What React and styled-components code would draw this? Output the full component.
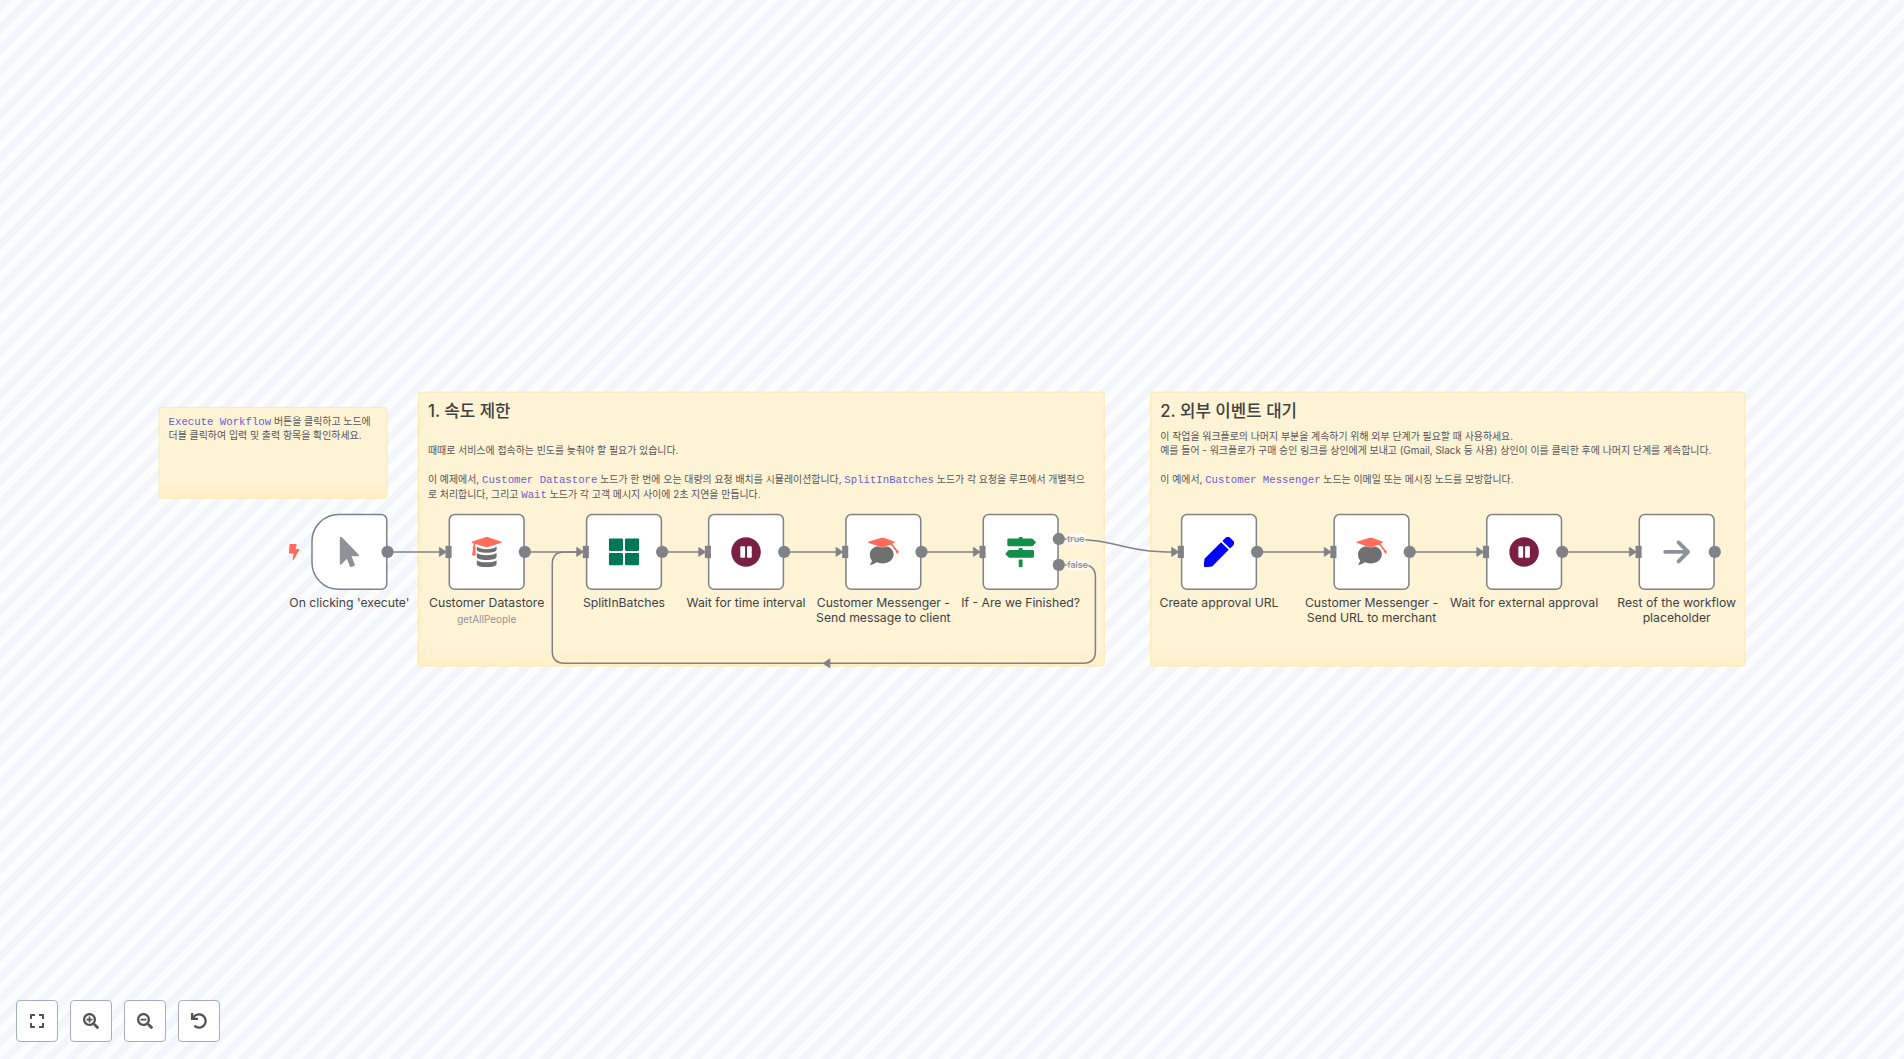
import React, { useEffect, useState } from "react";
import styled, { createGlobalStyle, css } from "styled-components";
import {
  FaMousePointer,
  FaThLarge,
  FaPauseCircle,
  FaMapSigns,
  FaPen,
  FaExpand,
  FaSearchPlus,
  FaSearchMinus,
  FaUndo,
} from "react-icons/fa";
import { FaArrowRight } from "react-icons/fa6";

const GRID = 20;
const NODE = 100;
const BOUNDS = { x: 0, y: -20, width: 2080, height: 360 };
const LINE = "#7f8287";

const GlobalStyle = createGlobalStyle`
  *, *::before, *::after { box-sizing: border-box; }
  body {
    margin: 0;
    font-family: Inter, "Noto Sans CJK KR", sans-serif;
    color: #414244;
  }
`;

const Page = styled.main`
  position: relative;
  height: 100vh;
  overflow: hidden;
  background: #fcfdff;
`;

const Backdrop = styled.svg`
  display: block;
  width: 100%;
  height: 100%;
`;

const Viewport = styled.div`
  position: absolute;
  top: 0;
  left: 0;
  transform-origin: 0 0;
`;

const StickyNote = styled.section`
  position: absolute;
  top: ${(p) => p.$y}px;
  left: ${(p) => p.$x}px;
  width: ${(p) => p.$width}px;
  height: ${(p) => p.$height}px;
  padding: 8px 12px;
  border: 1px solid #fee48c;
  border-radius: 4px;
  background: linear-gradient(to top, #fff0c6, #fff3d6 24px);
  color: #55565a;
  font-size: 13px;
  line-height: 19px;
`;

const StickyTitle = styled.h2`
  margin: 0 0 8px;
  color: #414244;
  font-size: 22px;
  font-weight: 500;
  line-height: 32px;
`;

const StickyText = styled.p`
  margin: 0;
  & + & {
    margin-top: 19px;
  }
`;

const Code = styled.code`
  color: #6b5dd0;
  font-family: "Liberation Mono", monospace;
  font-size: 14px;
  line-height: 16px;
`;

const Edges = styled.svg`
  position: absolute;
  top: 0;
  left: 0;
  overflow: visible;
  fill: none;
  stroke: ${LINE};
  stroke-width: 2;
`;

const NodeBox = styled.article`
  position: absolute;
  top: ${(p) => p.$y}px;
  left: ${(p) => p.$x}px;
  display: flex;
  align-items: center;
  justify-content: center;
  width: ${NODE}px;
  height: ${NODE}px;
  border: 2px solid ${LINE};
  border-radius: ${(p) => (p.$trigger ? "36px 8px 8px 36px" : "8px")};
  background: #fff;
`;

const NodeIcon = styled.span`
  display: flex;
  color: ${(p) => p.$color};
  font-size: 40px;
`;

const NodeCaption = styled.div`
  position: absolute;
  top: 104px;
  left: -52px;
  display: flex;
  flex-direction: column;
  gap: 4px;
  width: 200px;
  text-align: center;
`;

const NodeName = styled.h3`
  margin: 0;
  color: #414244;
  font-size: 16px;
  font-weight: 400;
  line-height: 20px;
`;

const NodeSubtitle = styled.span`
  color: #909298;
  font-size: 13px;
  line-height: 16px;
`;

const port = css`
  position: absolute;
  top: ${(p) => p.$top}px;
  height: 16px;
  background: ${LINE};
`;

const InputPort = styled.span`
  ${port}
  left: -6px;
  width: 8px;
`;

const OutputPort = styled.span`
  ${port}
  right: -10px;
  width: 16px;
  border-radius: 50%;
`;

const PortLabel = styled.span`
  position: absolute;
  top: ${(p) => p.$top}px;
  left: 108px;
  padding: 0 1px;
  background: rgba(255, 255, 255, 0.7);
  color: #7f8287;
  font-size: 12px;
  line-height: 14px;
`;

const TriggerMark = styled.svg`
  position: absolute;
  top: 36px;
  left: -33px;
  width: 16px;
  height: 24px;
  fill: #ff6d5a;
`;

const Controls = styled.nav`
  position: absolute;
  bottom: 17px;
  left: 16px;
  display: flex;
  gap: 12px;
`;

const ControlButton = styled.button`
  display: flex;
  align-items: center;
  justify-content: center;
  width: 42px;
  height: 42px;
  padding: 0;
  border: 1px solid #a8acba;
  border-radius: 4px;
  background: #fff;
  color: #525356;
  font-size: 16px;
  cursor: pointer;
`;

function HatDatabase() {
  return (
    <svg width="40" height="40" viewBox="0 0 40 40" aria-hidden="true">
      <g fill="#707070">
        <path d="M7 13c3 2.600 8 3.400 13 3.400s10-.8 13-3.400v4.200c0 2.200-6 4-13 4s-13-1.800-13-4z" />
        <path d="M7 21.500c3 2 8 2.800 13 2.800s10-.8 13-2.800v5c0 2.200-6 4-13 4s-13-1.800-13-4z" />
        <path d="M7 30.800c3 2 8 2.800 13 2.800s10-.8 13-2.800V36c0 2.200-6 4-13 4S7 38.200 7 36z" />
      </g>
      <path
        fill="#ff6d5a"
        stroke="#fff"
        strokeWidth="1"
        paintOrder="stroke"
        d="M20 .5c1 0 2 .2 3 .5l15.500 5.200c1.700.6 1.700 1.500 0 2.100L23 13.300c-2 .7-4 .7-6 0L5.500 9.600c-.6 1-.8 2-.8 3.300.8.500 1 1.500.4 2.400l.6 8.700c0 .5-.3.800-.8.800H1.700c-.6 0-.9-.3-.8-.8l1.200-8.700c-.6-.9-.5-1.900.4-2.400 0-1.700.2-3 .9-4.100L1.500 8.200c-1.600-.6-1.600-1.500 0-2L17 1c1-.3 2-.5 3-.5z"
      />
    </svg>
  );
}

function HatMessage() {
  return (
    <svg width="40" height="40" viewBox="0 0 40 40" aria-hidden="true">
      <path
        fill="#707070"
        d="M18 12c9 0 15.500 4.500 15.500 11.300S27 35 18.500 35c-2.800 0-5.300-.5-7.500-1.400C8.700 35.600 5.700 37 2 37c1.500-1.700 2.700-3.700 3-5.800-1.800-2-2.700-4.600-2.700-7.900C2.300 16.500 9 12 18 12z"
      />
      <path
        fill="#ff6d5a"
        stroke="#fff"
        strokeWidth="1"
        paintOrder="stroke"
        d="M17.500 1.500c1-.2 2-.2 3 0l13.700 4.700c1.400.6 1.400 1.300.2 1.900l-3 1.300c1.800 1.400 3 3 3.800 4.900 1 .1 1.600.8 1.600 1.700l3.700 3.500c.4.400.4.800 0 1.100l-2 1.500c-.4.300-.8.200-1-.3l-2.300-4.700c-1.200 0-2-.8-1.800-1.900-1-2-2.300-3.500-4.200-4.700l-7.200 2.600c-2 .6-4 .6-6 0L1 8.200c-1.400-.6-1.400-1.300 0-1.900z"
      />
    </svg>
  );
}

function BoltMark() {
  return (
    <TriggerMark viewBox="0 0 16 24" aria-hidden="true">
      <path d="M3.500 1.500h7.600c.6 0 .9.400.8.900L10.600 8.200h4c.7 0 1 .6.700 1.200L8 22.400c-.5.800-1.500.5-1.400-.4l1.400-8H2.600c-.6 0-.9-.4-.9-1l.8-10.600c.1-.6.4-.9 1-.9z" />
    </TriggerMark>
  );
}

const nodes = [
  { x: 200, name: "On clicking 'execute'", icon: <FaMousePointer />, color: "#909298", trigger: true },
  { x: 380, name: "Customer Datastore", subtitle: "getAllPeople", icon: <HatDatabase /> },
  { x: 560, name: "SplitInBatches", icon: <FaThLarge />, color: "#007755" },
  { x: 720, name: "Wait for time interval", icon: <FaPauseCircle />, color: "#7b2042" },
  { x: 900, name: "Customer Messenger - Send message to client", icon: <HatMessage /> },
  { x: 1080, name: "If - Are we Finished?", icon: <FaMapSigns />, color: "#12904a", outputs: ["true", "false"] },
  { x: 1340, name: "Create approval URL", icon: <FaPen />, color: "#0000ff" },
  { x: 1540, name: "Customer Messenger - Send URL to merchant", icon: <HatMessage /> },
  { x: 1740, name: "Wait for external approval", icon: <FaPauseCircle />, color: "#7b2042" },
  { x: 1940, name: "Rest of the workflow placeholder", icon: <FaArrowRight />, color: "#909298" },
];

const NODE_Y = 140;
const MID_Y = NODE_Y + NODE / 2;
const ROUND = 16;

function Arrow({ x, y, flip }) {
  const size = flip ? -9 : 9;
  return <path d={`M${x} ${y} l${-size} -6 v12 z`} fill={LINE} strokeWidth="1" strokeLinejoin="round" />;
}

function Connections() {
  const straight = nodes.slice(0, -1).filter((n) => !n.outputs);
  return (
    <Edges width="1" height="1" aria-hidden="true">
      {straight.map((n) => {
        const next = nodes[nodes.indexOf(n) + 1];
        return (
          <g key={n.x}>
            <path d={`M${n.x + NODE} ${MID_Y} H${next.x - 6}`} />
            <Arrow x={next.x - 3} y={MID_Y} />
          </g>
        );
      })}
      <path d={`M1188 173 C1260 173 1260 ${MID_Y} 1332 ${MID_Y}`} />
      <Arrow x={1337} y={MID_Y} />
      <path
        d={`M1188 207 H${1228 - ROUND} Q1228 207 1228 ${207 + ROUND} V${336 - ROUND} Q1228 336 ${1228 - ROUND} 336
            H${516 + ROUND} Q516 336 516 ${336 - ROUND} V${MID_Y + ROUND} Q516 ${MID_Y} ${516 + ROUND} ${MID_Y} H552`}
      />
      <Arrow x={871} y={336} flip />
    </Edges>
  );
}

function WorkflowNode({ node, first }) {
  const outputs = node.outputs || [""];
  return (
    <NodeBox $x={node.x} $y={NODE_Y} $trigger={node.trigger}>
      {node.trigger && <BoltMark />}
      <NodeIcon $color={node.color}>{node.icon}</NodeIcon>
      {!first && <InputPort $top={40} />}
      {outputs.map((label, i) => {
        const top = outputs.length > 1 ? 23 + i * 34 : 40;
        return (
          <React.Fragment key={label}>
            <OutputPort $top={top} />
            {label && <PortLabel $top={top + 1}>{label}</PortLabel>}
          </React.Fragment>
        );
      })}
      <NodeCaption>
        <NodeName>{node.name}</NodeName>
        {node.subtitle && <NodeSubtitle>{node.subtitle}</NodeSubtitle>}
      </NodeCaption>
    </NodeBox>
  );
}

function Stripes({ view }) {
  const gap = GRID * view.scale;
  return (
    <Backdrop aria-hidden="true">
      <pattern
        id="stripes"
        x={view.x % gap}
        y={(view.y % gap) + gap / 2}
        width={gap}
        height={gap}
        patternUnits="userSpaceOnUse"
        patternTransform={`rotate(135) translate(-${gap},-${gap})`}
      >
        <path d={`M0 ${gap / 2} H${gap}`} stroke="#f4f5fb" strokeWidth={gap / 2} />
      </pattern>
      <rect width="100%" height="100%" fill="url(#stripes)" />
    </Backdrop>
  );
}

function fitView(size, zoom) {
  const fit = Math.min(size.width / (BOUNDS.width * 1.2), size.height / (BOUNDS.height * 1.2));
  const scale = fit * zoom;
  return {
    scale,
    x: size.width / 2 - (BOUNDS.x + BOUNDS.width / 2) * scale,
    y: Math.floor(size.height / 2 - (BOUNDS.y + BOUNDS.height / 2) * scale),
  };
}

const windowSize = () => ({ width: window.innerWidth, height: window.innerHeight });

export default function App() {
  const [size, setSize] = useState(windowSize);
  const [zoom, setZoom] = useState(1);

  useEffect(() => {
    const onResize = () => setSize(windowSize());
    window.addEventListener("resize", onResize);
    return () => window.removeEventListener("resize", onResize);
  }, []);

  const view = fitView(size, zoom);

  return (
    <Page>
      <GlobalStyle />
      <Stripes view={view} />
      <Viewport style={{ transform: `translate(${view.x}px, ${view.y}px) scale(${view.scale})` }}>
        <StickyNote $x={0} $y={0} $width={300} $height={120}>
          <StickyText>
            <Code>Execute Workflow</Code> 버튼을 클릭하고 노드에 더블 클릭하여 입력 및 출력 항목을 확인하세요.
          </StickyText>
        </StickyNote>
        <StickyNote $x={340} $y={-20} $width={900} $height={360}>
          <StickyTitle>1. 속도 제한</StickyTitle>
          <StickyText>
            <br />
            때때로 서비스에 접속하는 빈도를 늦춰야 할 필요가 있습니다.
          </StickyText>
          <StickyText>
            이 예제에서, <Code>Customer Datastore</Code> 노드가 한 번에 오는 대량의 요청 배치를 시뮬레이션합니다,{" "}
            <Code>SplitInBatches</Code> 노드가 각 요청을 루프에서 개별적으
            <br />로 처리합니다, 그리고 <Code>Wait</Code> 노드가 각 고객 메시지 사이에 2초 지연을 만듭니다.
          </StickyText>
        </StickyNote>
        <StickyNote $x={1300} $y={-20} $width={780} $height={360}>
          <StickyTitle>2. 외부 이벤트 대기</StickyTitle>
          <StickyText>
            이 작업을 워크플로의 나머지 부분을 계속하기 위해 외부 단계가 필요할 때 사용하세요.
            <br />
            예를 들어 - 워크플로가 구매 승인 링크를 상인에게 보내고 (Gmail, Slack 등 사용) 상인이 이를 클릭한 후에 나머지
            단계를 계속합니다.
          </StickyText>
          <StickyText>
            이 예에서, <Code>Customer Messenger</Code> 노드는 이메일 또는 메시징 노드를 모방합니다.
          </StickyText>
        </StickyNote>
        <Connections />
        {nodes.map((node, i) => (
          <WorkflowNode key={node.x} node={node} first={i === 0} />
        ))}
      </Viewport>
      <Controls aria-label="Canvas controls">
        <ControlButton type="button" aria-label="Fit to view" onClick={() => setZoom(1)}>
          <FaExpand />
        </ControlButton>
        <ControlButton type="button" aria-label="Zoom in" onClick={() => setZoom(zoom * 1.2)}>
          <FaSearchPlus />
        </ControlButton>
        <ControlButton type="button" aria-label="Zoom out" onClick={() => setZoom(zoom / 1.2)}>
          <FaSearchMinus />
        </ControlButton>
        <ControlButton type="button" aria-label="Reset zoom" onClick={() => setZoom(1)}>
          <FaUndo />
        </ControlButton>
      </Controls>
    </Page>
  );
}
